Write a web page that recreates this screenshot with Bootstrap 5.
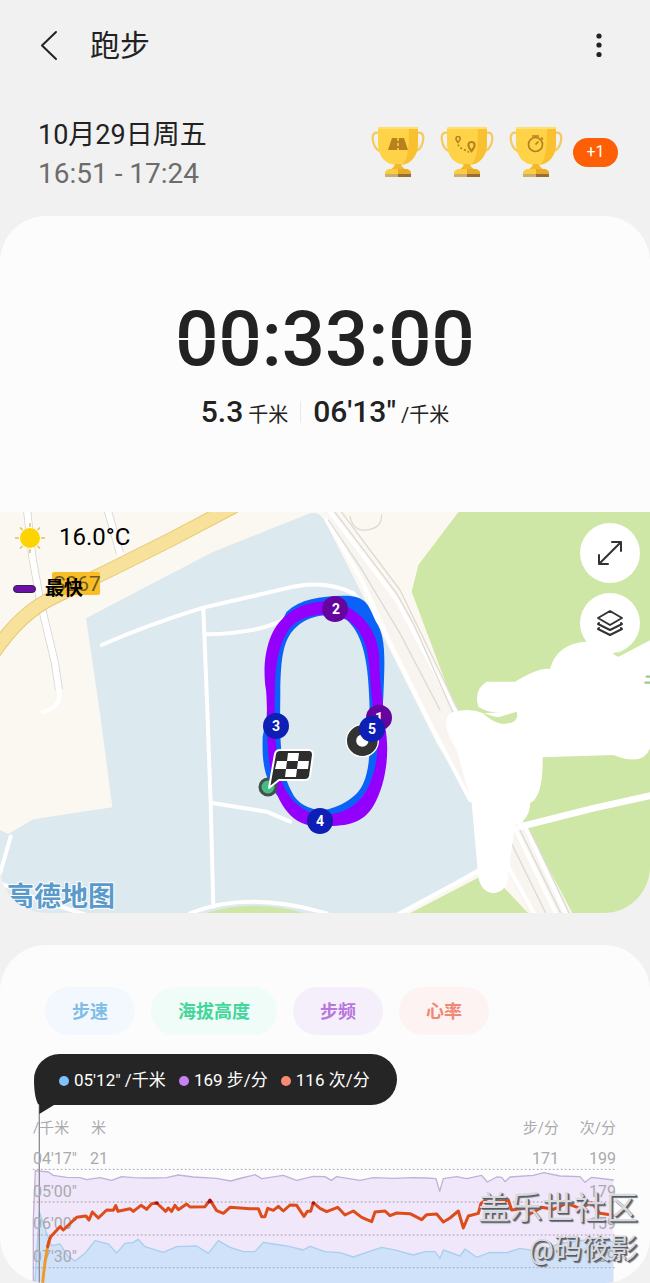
<!DOCTYPE html>
<html lang="zh-CN">
<head>
<meta charset="utf-8">
<meta name="viewport" content="width=device-width, initial-scale=1">
<title>跑步</title>
<link href="https://cdn.jsdelivr.net/npm/bootstrap@5.3.0/dist/css/bootstrap.min.css" rel="stylesheet">
<style>
  body { background: #f1f1f1; color: #222; font-family: Roboto, "Noto Sans CJK SC", sans-serif; }
  svg { display: block; }
  .topbar { height: 91px; padding: 0 36px; }
  .bare { border: 0; background: none; padding: 0; color: #222; line-height: 1; }
  .page-title { font-size: 30px; line-height: 40px; font-weight: 400; margin: 0 0 0 26px; }
  .summary { height: 125px; padding: 24px 32px 0 38px; }
  .day { font-size: 27px; line-height: 40px; }
  .hours { font-size: 28px; line-height: 38px; color: #6c6c6c; }
  .trophies { gap: 15px; margin-top: 10px; }
  .more { width: 45px; height: 29px; margin-left: -5px; border-radius: 15px; background: #fc5f05; color: #fff; font-size: 16px; }
  .sheet { background: #fcfcfc; border-radius: 46px; overflow: hidden; }
  .totals { height: 296px; padding-top: 78px; }
  .clock { font-size: 76px; line-height: 90px; font-weight: 500; color: #222; }
  .digit { position: relative; display: inline-block; }
  .digit::after { content: ""; position: absolute; left: 0; right: 0; top: 44px; height: 2px; background: #fcfcfc; }
  .big-num { font-size: 30px; line-height: 40px; font-weight: 500; }
  .unit { font-size: 20px; margin-left: 1px; }
  .sep { width: 1px; height: 22px; background: #e9e9e9; margin: 0 12px; }
  .map-info { top: 7px; left: 13px; color: #000; }
  .temp { font-size: 24px; line-height: 36px; margin-left: 10px; }
  .fastest { font-size: 19px; line-height: 28px; font-weight: 700; margin-top: 20px; gap: 9px; }
  .swatch { width: 23px; height: 8px; border-radius: 4px; background: #6a10a8; border: 1px solid #35224d; }
  .map-tools { top: 11px; right: 10px; gap: 10px; }
  .round { width: 60px; height: 60px; border: 0; border-radius: 50%; background: #fff; padding: 0; }
  .gap-block { height: 32px; }
  .chips { padding: 42px 45px 0; gap: 16px; }
  .chip { height: 48px; padding: 0 27px; border: 0; border-radius: 24px; font-size: 18px; font-weight: 700; }
  .chip-speed { background: #f3f8fe; color: #7fbde6; }
  .chip-alt { background: #effcf7; color: #43d69b; }
  .chip-step { background: #f4effb; color: #b877dc; }
  .chip-heart { background: #fdf3f2; color: #ee8976; }
  .tip { width: 363px; height: 51px; margin: 19px 0 0 34px; padding: 3px 0 0 25px; gap: 13px; border-radius: 26px 26px 26px 6px / 26px 26px 26px 25px; background: #252525; color: #fff; font-size: 17px; white-space: nowrap; }
  .dot { width: 10px; height: 10px; border-radius: 50%; margin-right: 5px; }
  .dot-speed { background: #7fc1fa; }
  .dot-step { background: #c682f2; }
  .dot-heart { background: #fa8a72; }
  .stamp { right: 12px; bottom: 12px; color: #d9d9dc; text-align: right; text-shadow: 1px 1px 0 #555c68, 2px 2px 1px #6b7078; }
  .stamp-big { font-size: 32px; line-height: 42px; }
  .stamp-small { font-size: 28px; line-height: 42px; }
</style>
</head>
<body>
<header class="topbar d-flex align-items-center">
  <button class="bare" type="button" aria-label="返回">
    <svg width="28" height="34" viewBox="0 0 28 34" fill="none" stroke="#222" stroke-width="2" stroke-linecap="round" stroke-linejoin="round"><path d="M20 3 6 16.500 20 30"/></svg>
  </button>
  <h1 class="page-title flex-grow-1">跑步</h1>
  <button class="bare" type="button" aria-label="更多">
    <svg width="30" height="30" viewBox="0 0 30 30" fill="#222"><circle cx="15" cy="5" r="2.600"/><circle cx="15" cy="14" r="2.600"/><circle cx="15" cy="23.500" r="2.600"/></svg>
  </button>
</header>

<section class="summary d-flex justify-content-between align-items-start">
  <div>
    <div class="day">10月29日周五</div>
    <div class="hours">16:51 - 17:24</div>
  </div>
  <div class="trophies d-flex align-items-center">
    <svg width="0" height="0" class="position-absolute" aria-hidden="true">
      <defs>
        <g id="cup">
          <path d="M8 8C1 6 1 13 2.500 18c1.500 6 5 8 9 9M46 8c7-2 7 5 5.500 10-1.500 6-5 8-9 9" fill="none" stroke="#f5c95c" stroke-width="2.200"/>
          <path d="M7 4q0-2 2-2h36q2 0 2 2v14c0 13-7 22-20 22S7 31 7 18z" fill="#fed348"/>
          <path d="M38 2h7q2 0 2 2v14c0 12-6 20-16 22 6-5 7-18 7-38z" fill="#f9c030"/>
          <path d="M7 4q0-2 2-2h36q2 0 2 2z" fill="#ffdf6e"/>
          <path d="M24 39h6q1 4 6 6H18q5-2 6-6z" fill="#f2b92d"/>
          <path d="M14 47q1-2 4-3h18q3 1 4 3v2H14z" fill="#fccc3e"/>
          <path d="M27 44h9q3 1 4 3v2H27z" fill="#eaaa25"/>
          <path d="M14 49h13v3H14z" fill="#c9ad72"/><path d="M27 49h13v3H27z" fill="#936f35"/>
        </g>
      </defs>
    </svg>
    <svg width="54" height="54" viewBox="0 0 54 54" role="img" aria-label="距离奖杯"><use href="#cup"/><path d="M21 13h12l4 12H17z" fill="#b8811e"/><path d="M27 13v12" stroke="#fed348" stroke-width="1.500" stroke-dasharray="3 2"/></svg>
    <svg width="54" height="54" viewBox="0 0 54 54" role="img" aria-label="路线奖杯"><use href="#cup"/><g fill="none" stroke="#b8811e"><path d="M18 17.500c-2-2.500-2.300-3.400-2-4.500a2.200 2.200 0 0 1 4.200 0c.3 1.100-.2 2-2.200 4.500z" stroke-width="1.600"/><path d="M31.500 26c-3.200-4-3.500-5.200-3-6.700a3.100 3.100 0 0 1 6 0c.5 1.500.2 2.700-3 6.700z" stroke-width="2.200"/><path d="M18 19.500q2 4 6 5 4 2 5 3" stroke-width="1.500" stroke-dasharray="2 2"/></g></svg>
    <svg width="54" height="54" viewBox="0 0 54 54" role="img" aria-label="时间奖杯"><use href="#cup"/><g fill="none" stroke="#b8811e" stroke-width="1.700"><circle cx="26.500" cy="19.500" r="7"/><path d="M23 11h7M32 12.500l2 2M26.500 19.500l3-3M26.500 11v2"/></g></svg>
    <button type="button" class="more border-0 p-0">+1</button>
  </div>
</section>

<main>
  <section class="sheet">
    <div class="totals text-center">
      <div class="clock"><span class="digit">0</span><span class="digit">0</span>:33:<span class="digit">0</span><span class="digit">0</span></div>
      <div class="d-flex justify-content-center align-items-center mt-2">
        <div><span class="big-num">5.3</span> <span class="unit">千米</span></div>
        <div class="sep"></div>
        <div><span class="big-num">06'13"</span> <span class="unit">/千米</span></div>
      </div>
    </div>
    <div class="position-relative">
      <svg class="w-100 h-auto" viewBox="0 512 650 401" role="img" aria-label="跑步路线图">
        <g transform="translate(0 510) scale(.33333)" fill="none" stroke-linecap="round" stroke-linejoin="round">
          <path d="M0 0H1950V1215H0z" fill="#fbf8f2"/>
          <path d="M258 325 420 240 640 125 930 10Q960 0 978 40L1060 200 1170 420 1310 700 1415 870 1440 1070 1200 1215H0V960l25 12 75-44 237-36L300 610z" fill="#dce9ef"/>
          <path d="M1380 0H1950V1215H1720L1580 950 1360 580 1235 245 1255 165z" fill="#cfe7a6"/>
          <path d="M1220 1215 1440 1100 1500 1120 1590 1215zM600 1215Q760 1160 930 1215z" fill="#cfe7a6"/>
          <path d="M985 0 1170 240 1370 600 1720 1215H1590L1400 850 1220 480 1050 150 975 0z" fill="#f8f4ef"/>
          <path d="M80 -10 97 140 120 270 165 460 177 540M320 -10 360 130" stroke="#d9d4d2" stroke-width="24" stroke-linecap="butt"/>
          <path d="M80 -10 97 140 120 270 165 460 177 542M320 -10 360 130" stroke="#fff" stroke-width="19"/>
          <path d="M177 540Q185 595 128 605" stroke="#fff" stroke-width="12"/>
          <g stroke="#fff" stroke-width="12"><path d="M985 0 1190 270 1365 600M980 30 1080 200 1180 420 1290 640 1410 870M1480 960 1530 1080 1605 1215M1545 955 1670 1215M1575 950 1700 1215"/></g>
          <g stroke="#ded9d5" stroke-width="4"><path d="M985 30 1080 170 1200 370 1320 600M1000 0 1190 250 1240 340 1360 610M1020 0 1200 240 1375 600M1050 20q10 45 50 40 45-5 45-45M1515 960 1640 1215M1560 960 1685 1215M1590 960 1710 1215"/></g>
          <path d="M-20 430Q60 310 160 262L330 180 510 90 700 -10" stroke="#e5ca70" stroke-width="44"/>
          <path d="M-20 430Q60 310 160 262L330 180 510 90 700 -10" stroke="#f8e19b" stroke-width="38"/>
          <g stroke="#fff" stroke-width="12"><path d="M305 405Q440 345 610 293L880 230Q980 210 1060 250L1150 350M610 295 622 600 632 880 640 1190M620 373Q760 370 840 335L870 310M632 878 800 905 870 935M32 980 0 1090-10 1115 120 1170 260 1215M570 1210Q740 1140 980 1210M1190 1215 1440 1080"/></g>
          <path d="M1560 950 1780 895 1960 855" stroke="#fff" stroke-width="20"/>
          <path d="M1460 515Q1505 515 1545 515 1620 470 1650 477 1670 400 1760 395L1850 430 1950 385V715Q1930 770 1840 735L1628 742Q1630 860 1590 880 1590 930 1545 945L1525 1090Q1525 1145 1480 1150 1435 1145 1433 1080L1415 880 1370 720Q1320 640 1350 610 1400 590 1450 610L1545 605Q1470 615 1435 590 1420 540 1460 515z" fill="#fff"/>
          <path d="M1445 607Q1490 625 1500 620L1550 605Q1560 640 1510 642 1480 640 1445 607z" fill="#cfe7a6"/>
          <path d="M1845 430 1855 435 1950 385" stroke="#cfe7a6" stroke-width="10"/>
          <path d="M1940 500h10M1936 518h14" stroke="#9fca8f" stroke-width="7"/>

          <path fill="#0b62f8" fill-rule="evenodd" d="M860 305C900 268 960 258 1030 257S1105 285 1128 335C1158 380 1155 440 1150 560L1140 700C1135 780 1110 850 1050 900S920 930 870 895C790 830 786 760 788 680L800 620 810 400zM841 550 840 640C842 740 850 800 875 845 890 880 930 900 965 900S1070 870 1090 820C1112 770 1112 700 1108 570S1085 370 1040 330C990 305 930 315 890 350S842 440 841 550z"/>
          <path fill="#9300fb" fill-rule="evenodd" d="M1000 273C1090 300 1138 370 1138 450S1150 560 1155 650C1170 720 1160 820 1120 888S1010 945 960 950C880 950 830 890 812 780 798 720 804 600 798 540 785 460 800 360 860 315 900 280 950 273 1000 273zM1000 312C940 312 890 322 862 365S825 480 825 530C822 620 825 700 835 770 845 850 900 915 975 915 1060 910 1100 860 1120 790S1130 700 1120 600C1108 520 1112 450 1095 400S1040 320 1000 312z"/>
          <circle cx="1137" cy="623" r="39" fill="#66049f"/>
          <circle cx="1005" cy="297" r="39" fill="#66049f"/>
          <circle cx="1087" cy="692" r="33" fill="#fff" stroke="#333" stroke-width="29"/>
          <circle cx="1087" cy="692" r="48" stroke="#fff" stroke-width="4"/>
        </g>
        <g fill="#fff" font-family="Roboto" font-weight="700" font-size="14" text-anchor="middle">
          <text x="379" y="723">1</text>
          <g fill="#0d1fb4"><circle cx="372" cy="729" r="13"/><circle cx="276" cy="726" r="13"/><circle cx="320" cy="821" r="13"/></g>
          <text x="336" y="614">2</text><text x="276" y="731">3</text><text x="320" y="826">4</text><text x="372" y="734">5</text>
        </g>
        <circle cx="268" cy="787" r="8" fill="#44bd84" stroke="#44504f" stroke-width="3"/>
        <path d="M269 788 275 754q1-4 5-4h29q4 0 4 5l-3 21q-1 4-5 4H279z" fill="#2d2d2d" stroke="#fff" stroke-width="2" stroke-linejoin="round"/>
        <path d="M288 753h11l-1 8h-11zM277 761h10l-1 8h-11zM298 761h11l-1 8h-11zM286 769h11l-1 8h-11z" fill="#fff"/>
        <rect x="52" y="572" width="48" height="23" rx="2" fill="#f9bd25"/>
        <text x="53" y="591" font-family="Roboto" font-size="21" fill="#725b24">S267</text>
        <text x="7" y="906" font-family="Noto Sans CJK SC" font-weight="700" font-size="27" fill="#5a9aca" stroke="#fff" stroke-width="2" paint-order="stroke">高德地图</text>
      </svg>
      <div class="map-info position-absolute">
        <div class="d-flex align-items-center">
          <svg width="36" height="36" viewBox="0 0 36 36"><circle cx="17" cy="19" r="10" fill="#fdd400"/><path d="M17 4v4M17 30v4M2 19h4M28 19h4M7 8.500l2.500 2.500M24.500 27l2.500 2.500M27 8.500 24.500 11M9.500 27 7 29.500" stroke="#e2bd5c" stroke-width="1.500"/></svg>
          <span class="temp">16.0°C</span>
        </div>
        <div class="fastest d-flex align-items-center"><span class="swatch"></span>最快</div>
      </div>
      <div class="map-tools position-absolute d-flex flex-column">
        <button class="round d-flex align-items-center justify-content-center" type="button" aria-label="展开"><svg width="26" height="26" viewBox="0 0 26 26" fill="none" stroke="#333" stroke-width="2" stroke-linecap="round" stroke-linejoin="round"><path d="M2 24 24 2M15 2h9v9M2 15v9h9"/></svg></button>
        <button class="round d-flex align-items-center justify-content-center" type="button" aria-label="图层"><svg width="28" height="28" viewBox="0 0 28 28" fill="none" stroke="#333" stroke-width="2" stroke-linecap="round" stroke-linejoin="round"><path d="M14 2 26 9 14 16 2 9zM3 14l-1 1 12 6 12-6-1-1M3 19l-1 1 12 6 12-6-1-1"/></svg></button>
      </div>
    </div>
  </section>
  <div class="gap-block"></div>
  <section class="sheet position-relative">
    <div class="chips d-flex">
      <button type="button" class="chip chip-speed">步速</button>
      <button type="button" class="chip chip-alt">海拔高度</button>
      <button type="button" class="chip chip-step">步频</button>
      <button type="button" class="chip chip-heart">心率</button>
    </div>
    <div class="tip d-flex align-items-center">
      <span class="d-flex align-items-center"><i class="dot dot-speed"></i>05'12" /千米</span>
      <span class="d-flex align-items-center"><i class="dot dot-step"></i>169 步/分</span>
      <span class="d-flex align-items-center"><i class="dot dot-heart"></i>116 次/分</span>
    </div>
    <svg class="w-100 h-auto" viewBox="0 1105 650 178" role="img" aria-label="步速、步频与心率曲线">
      <g transform="translate(0 1100) scale(.33333)" stroke-linejoin="round" stroke-linecap="round" fill="none">
        <path d="M100 560V360L106 212 145 216 160 226 200 232 240 233 260 239 300 233 335 241 365 230 400 233 450 234 500 233 535 225 580 231 650 235 692 243 725 234 755 227 765 224 785 236 850 226 890 241 940 229 975 230 994 241 1010 230 1080 241 1120 233 1180 235 1240 233 1280 234 1308 236 1319 274 1330 236 1370 230 1400 236 1445 226 1462 246 1490 231 1505 232 1515 245 1530 231 1600 226 1632 218 1680 228 1740 230 1755 247 1775 232 1840 240V560z" fill="#f0e7fa"/>
        <path d="M100 560V360L106 212 145 216 160 226 200 232 240 233 260 239 300 233 335 241 365 230 400 233 450 234 500 233 535 225 580 231 650 235 692 243 725 234 755 227 765 224 785 236 850 226 890 241 940 229 975 230 994 241 1010 230 1080 241 1120 233 1180 235 1240 233 1280 234 1308 236 1319 274 1330 236 1370 230 1400 236 1445 226 1462 246 1490 231 1505 232 1515 245 1530 231 1600 226 1632 218 1680 228 1740 230 1755 247 1775 232 1840 240" stroke="#c0b1d8" stroke-width="4"/>
        <path d="M104 560 118 335 140 400 155 437 180 432 205 470 225 483 255 460 285 422 325 432 350 459 375 430 400 427 414 418 435 440 490 457 530 440 590 438 625 460 655 422 690 442 730 455 765 455 790 427 840 435 870 440 910 450 930 439 975 455 1020 458 1060 471 1100 457 1145 442 1190 451 1240 465 1275 455 1305 455 1320 475 1330 450 1380 468 1395 447 1430 472 1470 457 1520 458 1560 445 1620 455 1680 430 1760 420 1840 425V560z" fill="#d0e2fa"/>
        <path d="M104 560 118 335 140 400 155 437 180 432 205 470 225 483 255 460 285 422 325 432 350 459 375 430 400 427 414 418 435 440 490 457 530 440 590 438 625 460 655 422 690 442 730 455 765 455 790 427 840 435 870 440 910 450 930 439 975 455 1020 458 1060 471 1100 457 1145 442 1190 451 1240 465 1275 455 1305 455 1320 475 1330 450 1380 468 1395 447 1430 472 1470 457 1520 458 1560 445 1620 455 1680 430 1760 420 1840 425" stroke="#a8cfed" stroke-width="4"/>
        <g stroke="#b5aebd" stroke-width="4" stroke-dasharray="2 10"><path d="M100 208H1850M100 306H1850M100 405H1850M100 503H1850"/></g>
        <path d="M118 0V560" stroke="#8d8d94" stroke-width="4"/>
      </g>
      <g fill="#aaa9ae" font-family="Roboto, Noto Sans CJK SC, sans-serif" font-size="16">
        <g font-size="15"><text x="33" y="1133">/千米</text><text x="91" y="1133">米</text><text x="559" y="1133" text-anchor="end">步/分</text><text x="616" y="1133" text-anchor="end">次/分</text></g>
        <text x="33" y="1164">04'17"</text><text x="90" y="1164">21</text>
        <text x="33" y="1197">05'00"</text><text x="33" y="1229">06'00"</text><text x="33" y="1262">07'30"</text>
        <g text-anchor="end"><text x="559" y="1164">171</text><text x="616" y="1164">199</text><text x="616" y="1197">179</text><text x="616" y="1229">159</text><text x="616" y="1262">139</text></g>
      </g>
      <g transform="translate(0 1100) scale(.33333)" stroke-linejoin="round" stroke-linecap="round" fill="none">
        <path d="M118 0V42L162 15V0z" fill="#252525"/>
        <path d="M127 560Q138 440 152 410" stroke="#ee9a2a" stroke-width="9"/>
        <path d="M143 440Q147 420 152 410L180 380 190 390 215 366 230 352 258 348 267 360 277 336 295 354 320 330 340 331 347 317 354 334 390 326 400 334 423 316 440 328 455 311 470 309 497 334 505 324 515 334 525 316 535 329 560 312 570 321 615 320 630 300 650 332 670 340 690 322 750 326 775 326 785 350 795 350 803 325 820 331 835 319 850 333 870 315 890 316 912 349 922 334 932 334 940 308 960 325 980 335 1013 322 1035 345 1060 333 1085 352 1115 365 1125 336 1155 333 1170 347 1190 339 1230 341 1265 359 1280 344 1310 342 1330 366 1350 354 1375 333 1390 384 1405 348 1435 340 1443 310 1470 290 1500 305 1525 300 1535 330 1575 325 1590 342 1625 322 1660 328 1700 310 1740 325 1775 308 1800 340 1840 346" stroke="#de4c1a" stroke-width="9"/>
        <path d="M627 306 630 301 633 305M468 309h4M939 309h2" stroke="#9b1620" stroke-width="9"/>
      </g>
    </svg>
    <div class="stamp position-absolute">
      <div class="stamp-big">盖乐世社区</div>
      <div class="stamp-small">@码筱影</div>
    </div>
  </section>
</main>
<script src="https://cdn.jsdelivr.net/npm/bootstrap@5.3.0/dist/js/bootstrap.bundle.min.js"></script>
</body>
</html>
